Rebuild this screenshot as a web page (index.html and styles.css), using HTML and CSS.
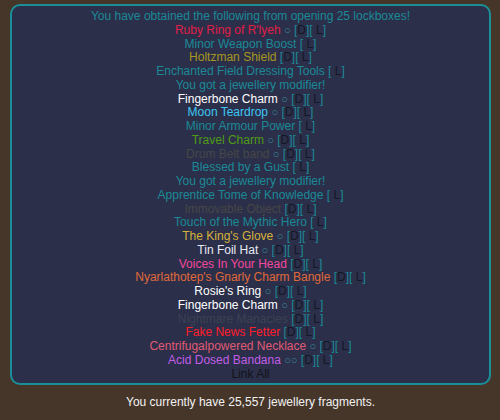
FILE: index.html
```html
<!DOCTYPE html>
<html>
<head>
<meta charset="utf-8">
<link rel="stylesheet" href="styles.css">
</head>
<body>
<div class="box">
  <div class="line teal">You have obtained the following from opening 25 lockboxes!</div>
  <div class="line"><span class="ruby">Ruby Ring of R'lyeh</span> <span class="sock">○</span> <span class="br">[<b>D</b>][ <b>L</b>]</span></div>
  <div class="line"><span class="teal">Minor Weapon Boost</span> <span class="br">[ <b>L</b>]</span></div>
  <div class="line"><span class="olive">Holtzman Shield</span> <span class="br">[<b>D</b>][ <b>L</b>]</span></div>
  <div class="line"><span class="teal">Enchanted Field Dressing Tools</span> <span class="br">[ <b>L</b>]</span></div>
  <div class="line teal">You got a jewellery modifier!</div>
  <div class="line"><span class="white">Fingerbone Charm</span> <span class="sock">○</span> <span class="br">[<b>D</b>][ <b>L</b>]</span></div>
  <div class="line"><span class="sky">Moon Teardrop</span> <span class="sock">○</span> <span class="br">[<b>D</b>][ <b>L</b>]</span></div>
  <div class="line"><span class="teal">Minor Armour Power</span> <span class="br">[ <b>L</b>]</span></div>
  <div class="line"><span class="green">Travel Charm</span> <span class="sock">○</span> <span class="br">[<b>D</b>][ <b>L</b>]</span></div>
  <div class="line"><span class="grey">Drum Belt band</span> <span class="sock">○</span> <span class="br">[<b>D</b>][ <b>L</b>]</span></div>
  <div class="line"><span class="teal">Blessed by a Gust</span> <span class="br">[ <b>L</b>]</span></div>
  <div class="line teal">You got a jewellery modifier!</div>
  <div class="line"><span class="teal">Apprentice Tome of Knowledge</span> <span class="br">[ <b>L</b>]</span></div>
  <div class="line"><span class="grey">Immovable Object</span> <span class="br">[<b>D</b>][ <b>L</b>]</span></div>
  <div class="line"><span class="teal">Touch of the Mythic Hero</span> <span class="br">[ <b>L</b>]</span></div>
  <div class="line"><span class="gold">The King's Glove</span> <span class="sock">○</span> <span class="br">[<b>D</b>][ <b>L</b>]</span></div>
  <div class="line"><span class="pale">Tin Foil Hat</span> <span class="sock">○</span> <span class="br">[<b>D</b>][ <b>L</b>]</span></div>
  <div class="line"><span class="pink">Voices In Your Head</span> <span class="br">[<b>D</b>][ <b>L</b>]</span></div>
  <div class="line"><span class="orange">Nyarlathotep's Gnarly Charm Bangle</span> <span class="br">[<b>D</b>][ <b>L</b>]</span></div>
  <div class="line"><span class="white">Rosie's Ring</span> <span class="sock">○</span> <span class="br">[<b>D</b>][ <b>L</b>]</span></div>
  <div class="line"><span class="white">Fingerbone Charm</span> <span class="sock">○</span> <span class="br">[<b>D</b>][ <b>L</b>]</span></div>
  <div class="line"><span class="dark">Nightmare Manacles</span> <span class="br">[<b>D</b>][ <b>L</b>]</span></div>
  <div class="line"><span class="red">Fake News Fetter</span> <span class="br">[<b>D</b>][ <b>L</b>]</span></div>
  <div class="line"><span class="salmon">Centrifugalpowered Necklace</span> <span class="sock">○</span> <span class="br">[<b>D</b>][ <b>L</b>]</span></div>
  <div class="line"><span class="violet">Acid Dosed Bandana</span> <span class="sock">○○</span> <span class="br">[<b>D</b>][ <b>L</b>]</span></div>
  <div class="line linkall">Link All</div>
</div>
<div class="footer">You currently have 25,557 jewellery fragments.</div>
</body>
</html>
```

FILE: styles.css
```css
html, body {
  margin: 0;
  padding: 0;
  background: #46362a;
}
body {
  padding: 4px 9px 0 10px;
  font-family: "Liberation Sans", Arial, sans-serif;
  font-size: 12px;
}
.box {
  border: 2px solid #1b8f98;
  border-radius: 10px;
  background: #2b2f4a;
  padding: 4px 0 2px 0;
  text-align: center;
  line-height: 13.75px;
}
.line { white-space: nowrap; }
.br { color: #1b8a96; }
.br b { font-weight: normal; color: #141824; }
.sock { color: #3a8a98; font-size: 11px; }
.teal { color: #1b8a96; }
.ruby { color: #e01e48; }
.olive { color: #a8971f; }
.white { color: #ffffff; }
.sky { color: #3fc6f2; }
.green { color: #4f9b16; }
.grey { color: #474747; }
.gold { color: #d6b23a; }
.pale { color: #e8eaf2; }
.pink { color: #f2489e; }
.orange { color: #e0693a; }
.dark { color: #3b4253; }
.red { color: #ff1e2a; }
.salmon { color: #e05a74; }
.violet { color: #c25ee6; }
.linkall { color: #111318; }
.footer {
  color: #f2f2f2;
  text-align: center;
  padding-top: 10px;
  line-height: 14px;
}
```
